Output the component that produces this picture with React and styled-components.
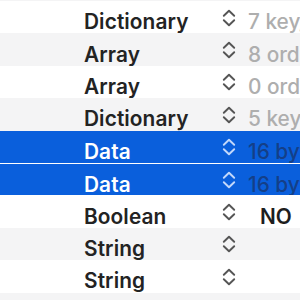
import React from "react";
import styled, { createGlobalStyle } from "styled-components";

const Global = createGlobalStyle`
  html, body { margin: 0; padding: 0; background: #ffffff; }
  body { font-family: Inter, "Noto Sans", "Liberation Sans", sans-serif; overflow: hidden; }
`;

const Table = styled.div`
  width: 300px;
  height: 300px;
  overflow: hidden;
  display: flex;
  flex-direction: column;
  background: #f4f4f5;
`;

const TopStrip = styled.div`
  height: 1px;
  flex: none;
  background: #f4f4f5;
`;

const Row = styled.div`
  flex: none;
  height: 32.4px;
  box-sizing: border-box;
  display: grid;
  grid-template-columns: 84px 138px 26px 1fr;
  align-items: center;
  background: ${(p) => (p.$selected ? "#0a5fdc" : p.$alt ? "#f4f4f5" : "#ffffff")};
  border-top: ${(p) => (p.$joined ? "1px solid #ffffff" : "none")};
  white-space: nowrap;
  overflow: hidden;
`;

const TypeCell = styled.div`
  grid-column: 2;
  font-size: 20.8px;
  font-weight: 600;
  letter-spacing: 0.1px;
  line-height: 24px;
  color: ${(p) => (p.$selected ? "#ffffff" : "#232323")};
  padding-top: 10px;
  overflow: hidden;
`;

const Stepper = styled.div`
  grid-column: 3;
  display: flex;
  align-items: center;
  padding-top: 1px;
  color: ${(p) => (p.$selected ? "#c3d8fa" : "#555555")};
`;

const ValueCell = styled.div`
  grid-column: 4;
  font-size: 20.8px;
  line-height: 24px;
  padding-top: 10px;
  padding-left: ${(p) => (p.$pop ? "12px" : "0")};
  color: ${(p) =>
    p.$selected ? "#143f88" : p.$strong ? "#1e1e1e" : "#aeaeae"};
  font-weight: ${(p) => (p.$strong ? 600 : 500)};
  overflow: hidden;
`;

const Chevrons = () => (
  <svg width="14" height="18" viewBox="0 0 14 18" fill="none" stroke="currentColor" strokeWidth="1.9" strokeLinecap="round" strokeLinejoin="round">
    <polyline points="1.8,6.8 7,1.8 12.2,6.8" />
    <polyline points="1.8,11.2 7,16.2 12.2,11.2" />
  </svg>
);

const rows = [
  { type: "Dictionary", value: "7 key/value pairs" },
  { type: "Array", value: "8 ordered objects" },
  { type: "Array", value: "0 ordered objects" },
  { type: "Dictionary", value: "5 key/value pairs" },
  { type: "Data", value: "16 bytes", selected: true },
  { type: "Data", value: "16 bytes", selected: true, joined: true },
  { type: "Boolean", value: "NO", strong: true, pop: true },
  { type: "String", value: "" },
  { type: "String", value: "" },
  { type: "", value: "", blank: true },
];

export default function App() {
  return (
    <>
      <Global />
      <Table>
        <TopStrip />
        {rows.map((r, i) => (
          <Row key={i} $alt={i % 2 === 1} $selected={r.selected} $joined={r.joined}>
            {!r.blank && (
              <>
                <TypeCell $selected={r.selected}>{r.type}</TypeCell>
                <Stepper $selected={r.selected}>
                  <Chevrons />
                </Stepper>
                <ValueCell $selected={r.selected} $strong={r.strong} $pop={r.pop}>
                  {r.value}
                </ValueCell>
              </>
            )}
          </Row>
        ))}
      </Table>
    </>
  );
}
